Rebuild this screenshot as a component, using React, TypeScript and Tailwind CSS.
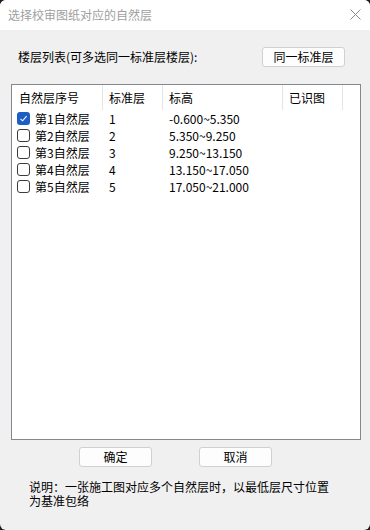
import React from 'react';

const rows = [
  { name: '第1自然层', std: '1', elev: '-0.600~5.350', checked: true },
  { name: '第2自然层', std: '2', elev: '5.350~9.250', checked: false },
  { name: '第3自然层', std: '3', elev: '9.250~13.150', checked: false },
  { name: '第4自然层', std: '4', elev: '13.150~17.050', checked: false },
  { name: '第5自然层', std: '5', elev: '17.050~21.000', checked: false },
];

function Checkbox({ checked }: { checked: boolean }) {
  if (checked) {
    return (
      <div className="w-[13px] h-[13px] rounded-[3px] bg-[#1c5fc4] flex items-center justify-center shrink-0">
        <svg width="9" height="9" viewBox="0 0 9 9" fill="none">
          <path d="M1.5 4.8 L3.6 6.8 L7.6 2.2" stroke="white" strokeWidth="1.1" />
        </svg>
      </div>
    );
  }
  return <div className="w-[13px] h-[13px] rounded-[3px] border border-[#3c3c3c] bg-white shrink-0" />;
}

function Button({ label, width }: { label: string; width: string }) {
  return (
    <button
      className={`${width} h-[20px] rounded-[3px] border border-[#d0d0d0] bg-[#fdfdfd] text-[12px] leading-none text-black flex items-center justify-center`}
    >
      {label}
    </button>
  );
}

export default function App() {
  return (
    <div
      className="w-[370px] h-[530px] bg-[#1e1e1e] text-[12px] text-black"
      style={{ fontFamily: '"Noto Sans CJK SC", "Noto Sans", sans-serif' }}
    >
      <div className="w-full h-full rounded-[6px] overflow-hidden flex flex-col bg-[#f0f0f0]">
        <div className="h-[30px] bg-white flex items-center justify-between pl-[8px] pr-[9px] shrink-0">
          <span className="text-[#a0a0a0] leading-none">选择校审图纸对应的自然层</span>
          <svg width="11" height="11" viewBox="0 0 11 11" fill="none" className="mb-[2px]">
            <path d="M0.5 0.5 L10.5 10.5 M10.5 0.5 L0.5 10.5" stroke="#8a8a8a" strokeWidth="1" />
          </svg>
        </div>

        <div className="flex items-center justify-between pt-[17px] pl-[18px] pr-[25px]">
          <span className="leading-none">楼层列表(可多选同一标准层楼层):</span>
          <Button label="同一标准层" width="w-[83px]" />
        </div>

        <div className="ml-[11px] mt-[17px] w-[350px] h-[356px] border border-[#828790] bg-white flex flex-col">
          <div className="flex h-[25px] shrink-0">
            <div className="w-[91px] border-r border-[#e5e5e5] pl-[7px] flex items-center">自然层序号</div>
            <div className="w-[60px] border-r border-[#e5e5e5] pl-[6px] flex items-center">标准层</div>
            <div className="w-[120px] border-r border-[#e5e5e5] pl-[6px] flex items-center">标高</div>
            <div className="w-[60px] border-r border-[#e5e5e5] pl-[6px] flex items-center">已识图</div>
          </div>
          {rows.map((r) => (
            <div key={r.name} className="flex h-[17px] items-center">
              <div className="w-[91px] pl-[5px] flex items-center gap-[5px]">
                <Checkbox checked={r.checked} />
                <span className="leading-none">{r.name}</span>
              </div>
              <div className="w-[60px] pl-[6px] leading-none">{r.std}</div>
              <div className="w-[120px] pl-[6px] leading-none">{r.elev}</div>
            </div>
          ))}
        </div>

        <div className="flex pl-[79px] gap-[47px] mt-[7px]">
          <Button label="确定" width="w-[73px]" />
          <Button label="取消" width="w-[73px]" />
        </div>

        <p className="mt-[13px] pl-[29px] leading-[14px]">
          说明：一张施工图对应多个自然层时，以最低层尺寸位置
          <br />
          为基准包络
        </p>
      </div>
    </div>
  );
}
